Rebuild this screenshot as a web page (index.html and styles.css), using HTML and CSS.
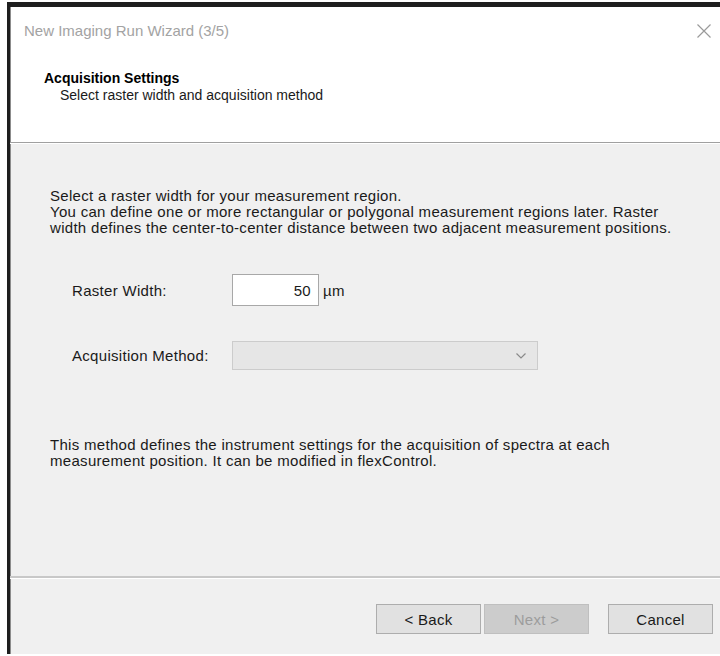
FILE: index.html
```html
<!DOCTYPE html>
<html lang="en">
<head>
<meta charset="utf-8">
<title>New Imaging Run Wizard (3/5)</title>
<link rel="stylesheet" href="styles.css">
</head>
<body>
<div class="window">
  <header class="titlebar">
    <span class="title">New Imaging Run Wizard (3/5)</span>
    <span class="close" aria-label="Close">
      <svg width="16" height="16" viewBox="0 0 16 16"><path d="M1.5 1.5 L14.5 14.5 M14.5 1.5 L1.5 14.5" stroke="#9a9a9a" stroke-width="1.2" fill="none"/></svg>
    </span>
  </header>
  <section class="banner">
    <h1 class="banner-title">Acquisition Settings</h1>
    <p class="banner-sub">Select raster width and acquisition method</p>
  </section>
  <main class="content">
    <p class="intro">Select a raster width for your measurement region.<br>You can define one or more rectangular or polygonal measurement regions later. Raster<br>width defines the center-to-center distance between two adjacent measurement positions.</p>
    <div class="field field-raster">
      <label class="field-label" for="raster">Raster Width:</label>
      <input class="num-input" id="raster" type="text" value="50">
      <span class="unit">µm</span>
    </div>
    <div class="field field-method">
      <label class="field-label">Acquisition Method:</label>
      <div class="combo">
        <svg class="chevron" width="12" height="8" viewBox="0 0 12 8"><path d="M1.5 1.5 L6 6 L10.5 1.5" stroke="#8a8a8a" stroke-width="1.2" fill="none"/></svg>
      </div>
    </div>
    <p class="note">This method defines the instrument settings for the acquisition of spectra at each<br>measurement position. It can be modified in flexControl.</p>
  </main>
  <footer class="actions">
    <button class="btn" type="button">&lt; Back</button>
    <button class="btn btn-disabled" type="button">Next &gt;</button>
    <button class="btn btn-cancel" type="button">Cancel</button>
  </footer>
</div>
</body>
</html>
```
FILE: styles.css
```css
html, body {
  margin: 0;
  padding: 0;
  background: #ffffff;
}

body {
  width: 720px;
  height: 656px;
  overflow: hidden;
  font-family: "Liberation Sans", Arial, sans-serif;
  font-size: 15px;
  letter-spacing: 0.3px;
  color: #1a1a1a;
}

.window {
  margin: 2px 0 0 7px;
  height: 647px;
  border-top: 5px solid #1e1e1e;
  border-left: 3px solid #1e1e1e;
  box-shadow: inset 1px 0 0 #8c8c8c;
  display: flex;
  flex-direction: column;
  background: #f0f0f0;
}

.titlebar {
  background: #ffffff;
  height: 48px;
  display: flex;
  align-items: flex-start;
  justify-content: space-between;
  padding: 0 0 0 14px;
  box-shadow: inset 1px 0 0 #8c8c8c;
  letter-spacing: 0;
}

.title {
  margin-top: 14px;
  font-size: 15px;
  line-height: 20px;
  color: #a3a3a3;
}

.close {
  margin: 16px 8px 0 0;
  width: 16px;
  height: 16px;
}

.close svg {
  display: block;
}

.banner {
  background: #ffffff;
  padding: 14px 0 0 34px;
  height: 73px;
  border-bottom: 1px solid #a0a0a0;
  box-shadow: inset 1px 0 0 #8c8c8c, 0 1px 0 #ffffff;
  position: relative;
  z-index: 1;
  letter-spacing: 0;
}

.banner-title {
  margin: 0;
  font-size: 14px;
  line-height: 18px;
  font-weight: bold;
  color: #000000;
}

.banner-sub {
  margin: 0 0 0 16px;
  font-size: 14px;
  line-height: 16px;
}

.content {
  flex: 1;
  padding: 45px 0 0 40px;
  border-bottom: 2px solid #c8c8c8;
}

.intro,
.note {
  margin: 0;
  line-height: 16px;
}

.field {
  display: flex;
  align-items: center;
}

.field-label {
  width: 182px;
  padding-left: 22px;
  box-sizing: border-box;
}

.field-raster {
  margin-top: 38px;
  height: 32px;
}

.num-input {
  width: 87px;
  height: 32px;
  box-sizing: border-box;
  border: 1px solid #a8a8a8;
  background: #ffffff;
  text-align: right;
  padding: 0 7px 0 0;
  font: inherit;
  letter-spacing: inherit;
  color: #1a1a1a;
}

.unit {
  margin-left: 4px;
}

.field-method {
  margin-top: 35px;
  height: 29px;
}

.combo {
  width: 306px;
  height: 29px;
  box-sizing: border-box;
  border: 1px solid #cccccc;
  background: #e6e6e6;
  display: flex;
  align-items: center;
  justify-content: flex-end;
  padding-right: 10px;
}

.chevron {
  display: block;
}

.note {
  margin-top: 67px;
}

.actions {
  height: 76px;
  flex: none;
  display: flex;
  align-items: flex-start;
  padding: 25px 0 0 366px;
  box-sizing: border-box;
  border-top: 1px solid #ffffff;
}

.btn {
  width: 105px;
  height: 30px;
  box-sizing: border-box;
  border: 1px solid #adadad;
  background: #e1e1e1;
  font: inherit;
  letter-spacing: inherit;
  color: #1a1a1a;
  padding: 0;
}

.btn + .btn {
  margin-left: 3px;
}

.btn-disabled {
  background: #cccccc;
  border-color: #bfbfbf;
  color: #9c9c9c;
}

.btn-cancel {
  margin-left: 19px !important;
}
```
